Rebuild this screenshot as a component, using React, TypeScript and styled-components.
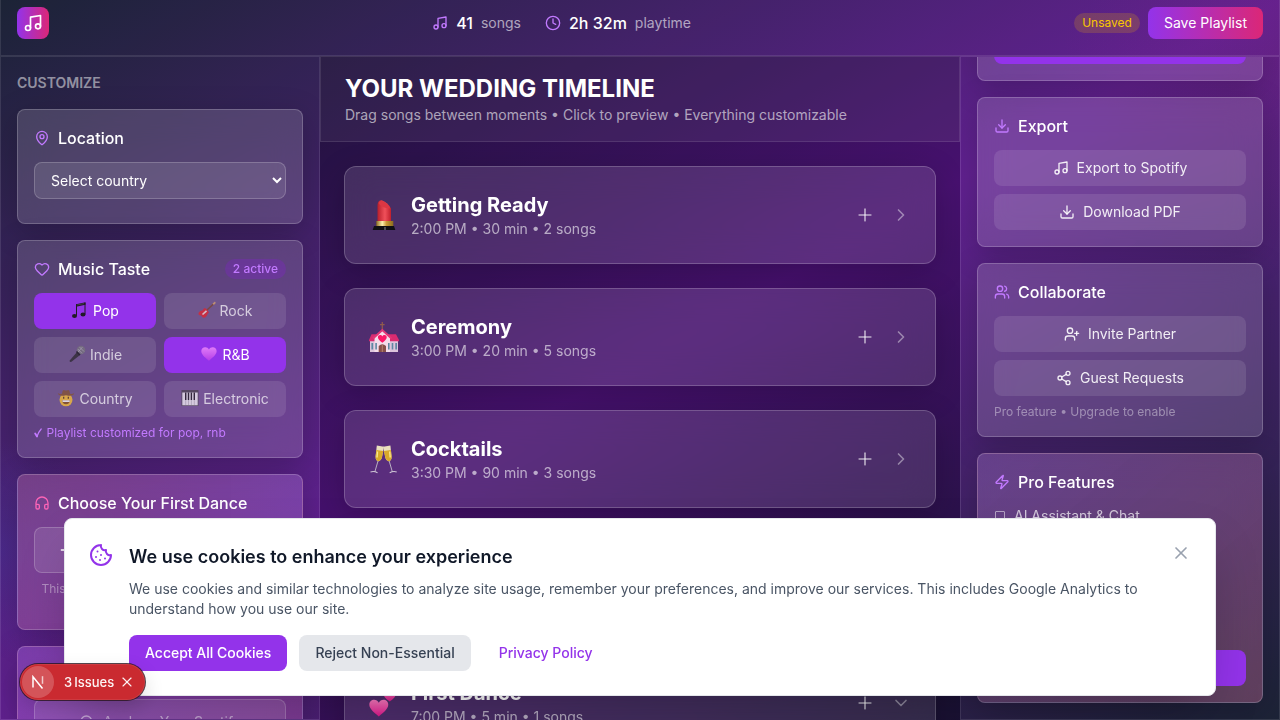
import React from 'react';
import styled, { createGlobalStyle, css } from 'styled-components';
import {
  Music, Clock, MapPin, Heart, Headphones, Download, Users, UserPlus, Share2, Zap,
  Plus, ChevronRight, ChevronDown, Cookie, X, Search,
} from 'lucide-react';

const GlobalStyle = createGlobalStyle`
  *, *::before, *::after { box-sizing: border-box; }
  html, body { margin: 0; padding: 0; height: 100%; overflow: hidden; }
  body {
    font-family: Inter, sans-serif;
    font-size: 16px;
    line-height: 24px;
    color: #fff;
    background: #101828;
  }
  h1, h2, h3, p, ul { margin: 0; padding: 0; font-size: inherit; font-weight: inherit; }
  button, select { font: inherit; color: inherit; margin: 0; }
  svg { display: block; flex-shrink: 0; }
`;

const Page = styled.div`
  width: 1280px;
  height: 720px;
  display: flex;
  flex-direction: column;
  overflow: hidden;
  background:
    radial-gradient(circle at 0 550px, rgba(43, 60, 190, 0.2), rgba(43, 60, 190, 0) 110px),
    radial-gradient(circle at 1280px 60px, rgba(130, 24, 110, 0.18), rgba(130, 24, 110, 0) 220px),
    linear-gradient(to bottom right, #10182c, #59168b, #10182c);
`;

const glass = css`
  background: rgba(255, 255, 255, 0.05);
  border: 1px solid rgba(255, 255, 255, 0.1);
`;

const Header = styled.header`
  ${glass}
  border-top: 0;
  height: 56px;
  flex-shrink: 0;
  display: flex;
  justify-content: space-between;
  align-items: flex-start;
  padding: 7px 16px 0;
`;

const Logo = styled.div`
  width: 32px;
  height: 32px;
  border-radius: 8px;
  display: flex;
  align-items: center;
  justify-content: center;
  background: linear-gradient(to right, #9333ea, #db2777);
`;

const Stats = styled.div`
  height: 32px;
  display: flex;
  align-items: center;
  gap: 24px;
`;

const Stat = styled.div`
  display: flex;
  align-items: center;
  gap: 8px;
  svg { color: #c27aff; }
  strong { font-weight: 500; }
  span { font-size: 14px; line-height: 20px; color: rgba(255, 255, 255, 0.6); }
`;

const HeaderActions = styled.div`
  height: 32px;
  display: flex;
  align-items: center;
  gap: 8px;
`;

const UnsavedPill = styled.span`
  font-size: 12px;
  line-height: 16px;
  padding: 2px 8px;
  border-radius: 999px;
  color: #fac800;
  background: rgba(240, 177, 0, 0.2);
`;

const SaveButton = styled.button`
  height: 32px;
  padding: 0 16px;
  border: 0;
  border-radius: 8px;
  font-size: 14px;
  background: linear-gradient(to right, #9333ea, #db2777);
`;

const Columns = styled.div`
  flex: 1;
  min-height: 0;
  display: grid;
  grid-template-columns: 320px 1fr 320px;
`;

const SidePanel = styled.aside`
  ${glass}
  min-height: 0;
  overflow: hidden;
  padding: 16px;
  display: flex;
  flex-direction: column;
  gap: 16px;
`;

const PanelLabel = styled.h2`
  font-size: 14px;
  line-height: 20px;
  font-weight: 600;
  color: rgba(255, 255, 255, 0.5);
`;

type Tone = 'plain' | 'pink' | 'violet' | 'pro';

const toneBackground: Record<Tone, string> = {
  plain: 'rgba(255, 255, 255, 0.15)',
  pink: 'linear-gradient(to right, rgba(246, 51, 120, 0.13), rgba(173, 70, 255, 0.12)), rgba(255, 255, 255, 0.14)',
  violet: 'linear-gradient(to bottom right, rgba(173, 70, 255, 0.2), rgba(246, 51, 154, 0.2)), rgba(255, 255, 255, 0.12)',
  pro: 'linear-gradient(to bottom right, rgba(173, 70, 255, 0.1), rgba(246, 51, 120, 0.18)), rgba(255, 255, 255, 0.14)',
};

const Card = styled.section<{ $tone?: Tone; $height?: number; $shift?: number }>`
  flex-shrink: 0;
  padding: 16px;
  border: 1px solid rgba(255, 255, 255, 0.2);
  border-radius: 8px;
  background: ${({ $tone = 'plain' }) => toneBackground[$tone]};
  backdrop-filter: blur(16px);
  box-shadow: 0 8px 32px rgba(0, 0, 0, 0.2);
  ${({ $height }) => $height && `height: ${$height}px;`}
  ${({ $shift }) => $shift && `margin-top: ${$shift}px;`}
`;

const CardTitle = styled.h3<{ $accent?: string }>`
  height: 24px;
  margin-bottom: 12px;
  display: flex;
  align-items: center;
  gap: 8px;
  font-size: 16px;
  font-weight: 500;
  svg { color: ${({ $accent = '#c27aff' }) => $accent}; }
`;

const ActiveCount = styled.span`
  margin-left: auto;
  padding: 2px 8px;
  border-radius: 999px;
  font-size: 12px;
  line-height: 16px;
  font-weight: 500;
  color: #c27aff;
  background: rgba(152, 16, 250, 0.2);
`;

const CountrySelect = styled.select`
  display: block;
  width: 100%;
  height: 37px;
  padding: 0 0 0 12px;
  border: 1px solid rgba(255, 255, 255, 0.2);
  border-radius: 8px;
  background: rgba(255, 255, 255, 0.1);
  font-size: 14px;
`;

const GenreGrid = styled.div`
  display: grid;
  grid-template-columns: 1fr 1fr;
  gap: 8px;
`;

const GenreButton = styled.button<{ $active?: boolean }>`
  height: 36px;
  display: flex;
  align-items: center;
  justify-content: center;
  gap: 4px;
  border: 0;
  border-radius: 8px;
  font-size: 14px;
  line-height: 20px;
  padding: 0;
  color: ${({ $active }) => ($active ? '#fff' : 'rgba(255, 255, 255, 0.7)')};
  background: ${({ $active }) => ($active ? '#9333ea' : 'rgba(255, 255, 255, 0.1)')};
  svg { opacity: ${({ $active }) => ($active ? 1 : 0.75)}; margin-top: -2px; }
`;

const Note = styled.p<{ $accent?: boolean; $center?: boolean }>`
  margin-top: 8px;
  font-size: 12px;
  line-height: 16px;
  text-align: ${({ $center }) => ($center ? 'center' : 'left')};
  color: ${({ $accent }) => ($accent ? '#c27aff' : 'rgba(255, 255, 255, 0.4)')};
`;

const CheckedNote = styled(Note)`
  display: flex;
  align-items: center;
  gap: 3.5px;
`;

const OutlineButton = styled.button`
  width: 100%;
  height: 46px;
  display: flex;
  align-items: center;
  justify-content: center;
  gap: 8px;
  border: 1px solid rgba(255, 255, 255, 0.2);
  border-radius: 8px;
  background: rgba(255, 255, 255, 0.1);
  font-size: 14px;
`;

const SpotifyButton = styled(OutlineButton)`
  color: rgba(255, 255, 255, 0.5);
`;

const ButtonStack = styled.div`
  display: flex;
  flex-direction: column;
  gap: 8px;
`;

const PanelButton = styled.button<{ $solid?: boolean }>`
  width: 100%;
  height: 36px;
  display: flex;
  align-items: center;
  justify-content: center;
  gap: 8px;
  border: 0;
  border-radius: 8px;
  font-size: 14px;
  color: rgba(255, 255, 255, 0.9);
  background: ${({ $solid }) => ($solid ? '#9333ea' : 'rgba(255, 255, 255, 0.1)')};
`;

const ProCard = styled(Card)`
  display: flex;
  flex-direction: column;
  justify-content: space-between;
`;

const FeatureRow = styled.div`
  display: flex;
  align-items: center;
  gap: 9px;
  font-size: 14px;
  line-height: 20px;
  color: rgba(255, 255, 255, 0.7);
`;

const FeatureBox = styled.span`
  width: 10px;
  height: 10px;
  margin-left: 1px;
  border: 1px solid rgba(255, 255, 255, 0.5);
  border-radius: 1px;
`;

const Timeline = styled.main`
  min-height: 0;
  overflow: hidden;
  background: rgba(0, 0, 0, 0.2);
`;

const TimelineHeader = styled.div`
  background: rgba(255, 255, 255, 0.06);
  border: 1px solid rgba(255, 255, 255, 0.1);
  padding: 16px 24px;
  h1 { font-size: 24px; line-height: 32px; font-weight: 700; }
  p { font-size: 14px; line-height: 20px; color: rgba(255, 255, 255, 0.6); }
`;

const MomentList = styled.div`
  padding: 24px;
  display: flex;
  flex-direction: column;
  gap: 24px;
`;

const Moment = styled.article<{ $open?: boolean }>`
  height: ${({ $open }) => ($open ? '200px' : '98px')};
  padding: 24px;
  display: flex;
  align-items: flex-start;
  border: 1px solid rgba(255, 255, 255, 0.2);
  border-radius: 12px;
  background: rgba(255, 255, 255, 0.12);
  backdrop-filter: blur(16px);
  box-shadow: 0 8px 32px rgba(0, 0, 0, 0.2);
`;

const MomentPicture = styled.span`
  height: 48px;
  width: 30px;
  margin-right: 12px;
  display: flex;
  align-items: center;
`;

const MomentText = styled.div`
  flex: 1;
  h2 { font-size: 20px; line-height: 28px; font-weight: 700; }
  p { font-size: 14px; line-height: 20px; color: rgba(255, 255, 255, 0.6); }
`;

const MomentActions = styled.div`
  height: 48px;
  display: flex;
  align-items: center;
  gap: 16px;
  color: rgba(255, 255, 255, 0.6);
  svg:last-child { color: rgba(255, 255, 255, 0.42); }
`;

const CookieBanner = styled.div`
  position: fixed;
  left: 64px;
  top: 518px;
  width: 1152px;
  height: 178px;
  padding: 24px;
  display: flex;
  gap: 16px;
  align-items: flex-start;
  border: 1px solid #e5e7eb;
  border-radius: 8px;
  background: #fff;
  box-shadow: 0 25px 50px -12px rgba(0, 0, 0, 0.25);
`;

const CookieBody = styled.div`
  flex: 1;
  h2 { font-size: 18px; line-height: 28px; font-weight: 600; color: #101828; }
  p { margin: 8px 0 16px; font-size: 14px; line-height: 20px; color: #4a5565; }
`;

const CookieActions = styled.div`
  display: flex;
  gap: 12px;
`;

const CookieButton = styled.button<{ $kind: 'primary' | 'muted' | 'link' }>`
  height: 36px;
  padding: 0 16px;
  border: 0;
  border-radius: 8px;
  font-size: 14px;
  font-weight: 500;
  color: ${({ $kind }) => ({ primary: '#fff', muted: '#364153', link: '#9333ea' })[$kind]};
  background: ${({ $kind }) => ({ primary: '#9333ea', muted: '#e5e7eb', link: 'transparent' })[$kind]};
`;

const IssuesBadge = styled.div`
  position: fixed;
  left: 20px;
  top: 664px;
  width: 125px;
  height: 36px;
  padding: 0 10px 0 2px;
  display: flex;
  align-items: center;
  border-radius: 18px;
  background: #ca2a30;
  box-shadow: 0 0 0 1px rgba(40, 20, 30, 0.8), inset 0 0 0 1px rgba(255, 255, 255, 0.08), 0 8px 20px rgba(0, 0, 0, 0.15);
  font-size: 13px;
  font-weight: 500;
  color: rgba(255, 255, 255, 0.95);
`;

const NextMark = styled.div`
  width: 32px;
  height: 32px;
  margin-right: 10px;
  display: flex;
  align-items: center;
  justify-content: center;
  border-radius: 50%;
  background: rgba(255, 255, 255, 0.2);
`;

const IssueText = styled.span`
  flex: 1;
  display: flex;
  gap: 2px;
`;

const heartPath = 'M12 21C5 15.500 1.500 12 1.500 7.800 1.500 4.600 4 2.500 6.800 2.500 9 2.500 11 3.700 12 5.700 13 3.700 15 2.500 17.200 2.500 20 2.500 22.500 4.600 22.500 7.800 22.500 12 19 15.500 12 21Z';

const Lipstick = () => (
  <svg width="30" height="30" viewBox="0 0 30 30">
    <defs>
      <linearGradient id="lipRed"><stop offset="0" stopColor="#b81f2b" /><stop offset=".55" stopColor="#f0505a" /><stop offset="1" stopColor="#c01f2c" /></linearGradient>
      <linearGradient id="lipGold"><stop offset="0" stopColor="#8a6a1e" /><stop offset=".35" stopColor="#fff0b0" /><stop offset=".6" stopColor="#c99a35" /><stop offset="1" stopColor="#8a6a1e" /></linearGradient>
    </defs>
    <path d="M8.500 21V5Q8.800 .3 12.500 .2Q19 2.500 22 8.500V21Z" fill="url(#lipRed)" />
    <path d="M9.500 3Q10.500 .3 13 .5Q19 3 21.500 8.500Q12 8 9.500 3Z" fill="#dc3743" />
    <path d="M7.300 21H24.300V26H7.300Z" fill="url(#lipGold)" />
    <path d="M5 26H25L26.300 30H3.700Z" fill="#111014" />
    <path d="M16 27v3" stroke="#aaa" strokeWidth=".8" />
  </svg>
);

const Chapel = () => (
  <svg width="30" height="30" viewBox="0 0 30 30">
    <path d="M13.300 0v8M11 2.600h4.600" stroke="#8f5a4d" strokeWidth="1.300" />
    <path d="M1 17H29V30H1Z" fill="#dcc4dc" />
    <path d="M0 18L2.500 12.300H27L30 18V19.200H0Z" fill="#d92b70" />
    <path d="M5.500 15.500L13.300 8.500L21 15.500V30H5.500Z" fill="#f5dcea" />
    <path d="M4 16.500L13.300 8L22.500 16.500" fill="none" stroke="#e23578" strokeWidth="2" />
    <path d={heartPath} transform="translate(8.300 12) scale(.42)" fill="#fb1768" />
    <path d="M9.700 30V24Q13.300 20.500 17 24V30Z" fill="#87504a" />
    <path d="M13.300 23v7" stroke="#c99a83" strokeWidth=".7" />
    <path d="M2.400 21h1.800v6.500H2.400ZM6.300 21h1.600v6.500H6.300ZM19 21h1.600v6.500H19ZM22.700 21h1.600v6.500h-1.600ZM26.300 21H28v6.500h-1.700Z" fill="#5e87a2" />
  </svg>
);

const Flute = () => (
  <>
    <path d="M7.800 1.500L15 2.800L12.800 14Q11.500 17.500 9.300 17.200Q6.500 16.800 6.600 12.500Z" fill="#eadfbd" />
    <path d="M7.300 6L14.300 7L12.800 14Q11.500 17.500 9.300 17.200Q6.500 16.800 6.600 12.500Z" fill="#d9a92a" />
    <path d="M8.500 7.500L8 13.500" stroke="#fae98d" strokeWidth="1.400" />
    <path d="M9 17L5.800 28" stroke="#b9b0c2" strokeWidth="1" />
    <path d="M1.500 28Q5 26.800 8.500 28.800" fill="none" stroke="#cfc6d6" strokeWidth="1.100" />
  </>
);

const Champagne = () => (
  <svg width="30" height="30" viewBox="0 0 30 30">
    <Flute />
    <g transform="translate(29.200 0) scale(-1 1)"><Flute /></g>
  </svg>
);

const TwoHearts = () => (
  <svg width="30" height="30" viewBox="0 0 30 30">
    <defs>
      <linearGradient id="heartPink" x2="0" y2="1"><stop offset="0" stopColor="#ff7dc4" /><stop offset="1" stopColor="#e0168c" /></linearGradient>
    </defs>
    <path d={heartPath} transform="translate(13.500 1) scale(.6)" fill="url(#heartPink)" />
    <path d={heartPath} transform="translate(-1 9.500) scale(.9)" fill="url(#heartPink)" />
  </svg>
);

const Picture18: React.FC<React.PropsWithChildren> = ({ children }) => (
  <svg width="18" height="18" viewBox="0 0 18 18">{children}</svg>
);

const NotePicture = () => (
  <Picture18>
    <path d="M5 3.200L14.500 1.300V3.800L5 5.700Z" fill="#201a26" />
    <path d="M5.500 3.300v11.500M14 1.700v11.500" stroke="#201a26" strokeWidth="1" />
    <ellipse cx="3.500" cy="15" rx="2.500" ry="1.900" fill="#201a26" />
    <ellipse cx="12" cy="13.500" rx="2.500" ry="1.900" fill="#201a26" />
    <path d="M6 4L13 2.600" stroke="#5b5265" strokeWidth=".6" />
  </Picture18>
);

const GuitarPicture = () => (
  <Picture18>
    <path d="M8 10L16 2.500" stroke="#7a4630" strokeWidth="1.600" />
    <path d="M14.500 2.500L17 .5L17.800 2L15.800 4Z" fill="#d6a26c" />
    <path d="M.5 12Q2 9 4.500 9.500Q5.500 7 7 7L9 8.500L11 11.500Q9.500 12.500 9 14.500Q7 17.500 5 16.500Q3.500 16 3.500 14.500Q.2 14.500 .5 12Z" fill="#e2242d" />
    <path d="M4.500 13.500L8.500 9.800" stroke="#f5dcdc" strokeWidth="1.700" />
  </Picture18>
);

const MicPicture = () => (
  <Picture18>
    <path d="M9 7L12 10L3.500 16.800L2 17L1.500 15.800Z" fill="#2c292f" />
    <circle cx="13" cy="5" r="4.300" fill="#77737c" />
    <path d="M9.800 4L14 8.300M11.500 2L16 6.500M10 7L14.500 2" stroke="#bdb9c1" strokeWidth=".7" />
    <path d="M8.500 6.500L12 10" stroke="#17151a" strokeWidth="1.600" />
  </Picture18>
);

const HeartPicture = () => (
  <Picture18>
    <defs>
      <linearGradient id="heartViolet" x2="0" y2="1"><stop offset="0" stopColor="#e07cf8" /><stop offset="1" stopColor="#b53ee8" /></linearGradient>
    </defs>
    <path d={heartPath} transform="translate(.2 .3) scale(.73)" fill="url(#heartViolet)" />
  </Picture18>
);

const CowboyPicture = () => (
  <Picture18>
    <circle cx="9" cy="10.800" r="6.500" fill="#fbc333" />
    <path d="M.8 4Q1.500 8 9 6.200Q16.500 8 17.200 4Q15.500 5.500 13 4.800Q12.600 .8 11 1Q9 2 7 1Q5.400 .8 5 4.800Q2.500 5.500 .8 4Z" fill="#86532f" />
    <path d="M6.700 7.700v2M11.300 7.700v2" stroke="#52321b" strokeWidth="1.200" />
    <path d="M5 11.300H13Q12.500 15.300 9 15.300Q5.500 15.300 5 11.300Z" fill="#8a5219" />
    <path d="M5.300 11.300H12.700V13H5.600Z" fill="#fff" />
  </Picture18>
);

const PianoPicture = () => (
  <Picture18>
    <rect x=".5" y="1" width="17" height="16" rx=".6" fill="#4b4351" />
    <path d="M1.300 3.500H16.700V16.300H1.300Z" fill="#f5f2f6" />
    <path d="M4.700 4v12M7.500 4v12M10.400 4v12M13.300 4v12" stroke="#99929e" strokeWidth=".5" />
    <path d="M4.700 3.500v7.500M7.500 3.500v7.500M10.400 3.500v7.500M13.300 3.500v7.500" stroke="#1c1821" strokeWidth="1.400" />
  </Picture18>
);

const moments = [
  { Picture: Lipstick, title: 'Getting Ready', meta: '2:00 PM • 30 min • 2 songs' },
  { Picture: Chapel, title: 'Ceremony', meta: '3:00 PM • 20 min • 5 songs' },
  { Picture: Champagne, title: 'Cocktails', meta: '3:30 PM • 90 min • 3 songs' },
  { title: '', meta: '' },
  { Picture: TwoHearts, title: 'First Dance', meta: '7:00 PM • 5 min • 1 songs', open: true },
];

const genres = [
  { Picture: NotePicture, label: 'Pop', active: true },
  { Picture: GuitarPicture, label: 'Rock' },
  { Picture: MicPicture, label: 'Indie' },
  { Picture: HeartPicture, label: 'R&B', active: true },
  { Picture: CowboyPicture, label: 'Country' },
  { Picture: PianoPicture, label: 'Electronic' },
];

export default function App() {
  return (
    <>
      <GlobalStyle />
      <Page>
        <Header>
          <Logo><Music size={20} /></Logo>
          <Stats>
            <Stat><Music size={16} /><strong>41</strong><span>songs</span></Stat>
            <Stat><Clock size={16} /><strong>2h 32m</strong><span>playtime</span></Stat>
          </Stats>
          <HeaderActions>
            <UnsavedPill>Unsaved</UnsavedPill>
            <SaveButton>Save Playlist</SaveButton>
          </HeaderActions>
        </Header>
        <Columns>
          <SidePanel>
            <PanelLabel>CUSTOMIZE</PanelLabel>
            <Card $height={115}>
              <CardTitle><MapPin size={16} />Location</CardTitle>
              <CountrySelect defaultValue="">
                <option value="">Select country</option>
              </CountrySelect>
            </Card>
            <Card>
              <CardTitle><Heart size={16} />Music Taste<ActiveCount>2 active</ActiveCount></CardTitle>
              <GenreGrid>
                {genres.map(({ Picture, label, active }) => (
                  <GenreButton key={label} $active={active}><Picture />{label}</GenreButton>
                ))}
              </GenreGrid>
              <CheckedNote $accent>
                <svg width="9" height="12" viewBox="0 0 9 12" fill="none" stroke="currentColor" strokeLinecap="round" strokeLinejoin="round">
                  <path d="M1.200 6.500L3 9.500" strokeWidth="1.800" />
                  <path d="M3 9.500Q4.500 5 7.200 2" strokeWidth="1.200" />
                </svg>
                Playlist customized for pop, rnb
              </CheckedNote>
            </Card>
            <Card $tone="pink" $height={156}>
              <CardTitle $accent="#fb64b6"><Headphones size={16} />Choose Your First Dance</CardTitle>
              <OutlineButton><Plus size={16} />Pick Your First Dance Song</OutlineButton>
              <Note $center>This dance will be highlighted during your<br />timeline</Note>
            </Card>
            <Card $tone="violet" $height={200}>
              <CardTitle />
              <SpotifyButton><Search size={16} />Analyze Your Spotify</SpotifyButton>
            </Card>
          </SidePanel>
          <Timeline>
            <TimelineHeader>
              <h1>YOUR WEDDING TIMELINE</h1>
              <p>Drag songs between moments • Click to preview • Everything customizable</p>
            </TimelineHeader>
            <MomentList>
              {moments.map(({ Picture, title, meta, open }, i) => (
                <Moment key={i} $open={open}>
                  <MomentPicture>{Picture && <Picture />}</MomentPicture>
                  <MomentText><h2>{title}</h2><p>{meta}</p></MomentText>
                  <MomentActions>
                    <Plus size={20} />
                    {open ? <ChevronDown size={20} /> : <ChevronRight size={20} />}
                  </MomentActions>
                </Moment>
              ))}
            </MomentList>
          </Timeline>
          <SidePanel>
            <Card $shift={-62}><PanelButton $solid /></Card>
            <Card>
              <CardTitle><Download size={16} />Export</CardTitle>
              <ButtonStack>
                <PanelButton><Music size={16} />Export to Spotify</PanelButton>
                <PanelButton><Download size={16} />Download PDF</PanelButton>
              </ButtonStack>
            </Card>
            <Card>
              <CardTitle><Users size={16} />Collaborate</CardTitle>
              <ButtonStack>
                <PanelButton><UserPlus size={16} />Invite Partner</PanelButton>
                <PanelButton><Share2 size={16} />Guest Requests</PanelButton>
              </ButtonStack>
              <Note>Pro feature • Upgrade to enable</Note>
            </Card>
            <ProCard $tone="pro" $height={250}>
              <div>
                <CardTitle><Zap size={16} />Pro Features</CardTitle>
                <FeatureRow><FeatureBox />AI Assistant &amp; Chat</FeatureRow>
              </div>
              <PanelButton $solid />
            </ProCard>
          </SidePanel>
        </Columns>
      </Page>
      <CookieBanner>
        <Cookie size={24} color="#9333ea" />
        <CookieBody>
          <h2>We use cookies to enhance your experience</h2>
          <p>
            We use cookies and similar technologies to analyze site usage, remember your preferences, and
            improve our services. This includes Google Analytics to understand how you use our site.
          </p>
          <CookieActions>
            <CookieButton $kind="primary">Accept All Cookies</CookieButton>
            <CookieButton $kind="muted">Reject Non-Essential</CookieButton>
            <CookieButton $kind="link">Privacy Policy</CookieButton>
          </CookieActions>
        </CookieBody>
        <X size={20} color="#99a1af" />
      </CookieBanner>
      <IssuesBadge>
        <NextMark>
          <svg width="14" height="14" viewBox="0 0 14 14" fill="none" stroke="#fff" strokeWidth="1.500">
            <path d="M2 12.500V1.800L11.500 13.500" />
            <path d="M11.500 1.200v7.600" opacity="0.7" />
          </svg>
        </NextMark>
        <IssueText><span>3</span><span>Issues</span></IssueText>
        <X size={16} strokeWidth={1.7} />
      </IssuesBadge>
    </>
  );
}
